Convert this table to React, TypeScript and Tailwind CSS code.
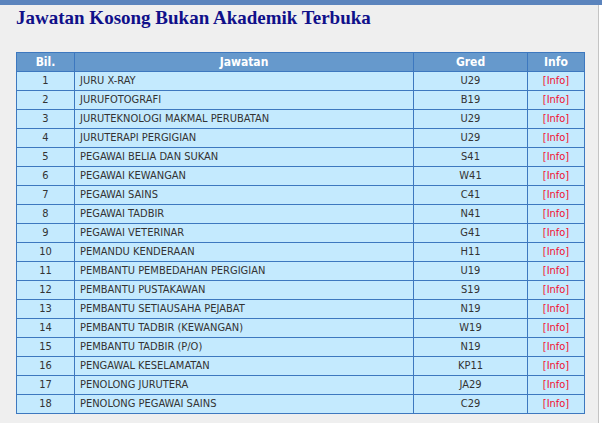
import React from "react";

const rows: [string, string][] = [
  ["JURU X-RAY", "U29"],
  ["JURUFOTOGRAFI", "B19"],
  ["JURUTEKNOLOGI MAKMAL PERUBATAN", "U29"],
  ["JURUTERAPI PERGIGIAN", "U29"],
  ["PEGAWAI BELIA DAN SUKAN", "S41"],
  ["PEGAWAI KEWANGAN", "W41"],
  ["PEGAWAI SAINS", "C41"],
  ["PEGAWAI TADBIR", "N41"],
  ["PEGAWAI VETERINAR", "G41"],
  ["PEMANDU KENDERAAN", "H11"],
  ["PEMBANTU PEMBEDAHAN PERGIGIAN", "U19"],
  ["PEMBANTU PUSTAKAWAN", "S19"],
  ["PEMBANTU SETIAUSAHA PEJABAT", "N19"],
  ["PEMBANTU TADBIR (KEWANGAN)", "W19"],
  ["PEMBANTU TADBIR (P/O)", "N19"],
  ["PENGAWAL KESELAMATAN", "KP11"],
  ["PENOLONG JURUTERA", "JA29"],
  ["PENOLONG PEGAWAI SAINS", "C29"],
];

export default function App() {
  return (
    <div className="w-[602px] h-[423px] overflow-hidden flex flex-col bg-[#efefef]">
      <div className="h-[5px] bg-[#5b84bd] shrink-0" />
      <div className="flex flex-1">
        <div className="flex-1 pl-[16px]">
          <h1
            className="text-[19px] font-bold leading-[22px] text-[#10108a] mt-[2px]"
            style={{ fontFamily: '"Liberation Serif", "DejaVu Serif", serif' }}
          >
            Jawatan Kosong Bukan Akademik Terbuka
          </h1>
          <table
            className="mt-[23px] border-collapse border border-[#3d78bf] text-[11px] text-[#333333]"
            style={{ fontFamily: '"DejaVu Sans Condensed", "DejaVu Sans", sans-serif' }}
          >
            <thead>
              <tr className="h-[19px] bg-[#6699cc] text-white text-[12px] font-bold">
                <th className="w-[58px] border border-[#3d78bf] p-0 font-bold">Bil.</th>
                <th className="w-[339px] border border-[#3d78bf] p-0 font-bold">Jawatan</th>
                <th className="w-[114px] border border-[#3d78bf] p-0 font-bold">Gred</th>
                <th className="w-[57px] border border-[#3d78bf] p-0 font-bold">Info</th>
              </tr>
            </thead>
            <tbody>
              {rows.map(([name, gred], i) => (
                <tr key={i} className="h-[19px] bg-[#c4eafe]">
                  <td className="border border-[#3d78bf] p-0 text-center">{i + 1}</td>
                  <td className="border border-[#3d78bf] py-0 pl-[5px] pr-0">{name}</td>
                  <td className="border border-[#3d78bf] p-0 text-center">{gred}</td>
                  <td className="border border-[#3d78bf] p-0 text-center text-[#f2102e]">[Info]</td>
                </tr>
              ))}
            </tbody>
          </table>
        </div>
        <div className="w-px bg-[#c4c4c4]" />
        <div className="w-[3px] bg-white" />
      </div>
    </div>
  );
}
